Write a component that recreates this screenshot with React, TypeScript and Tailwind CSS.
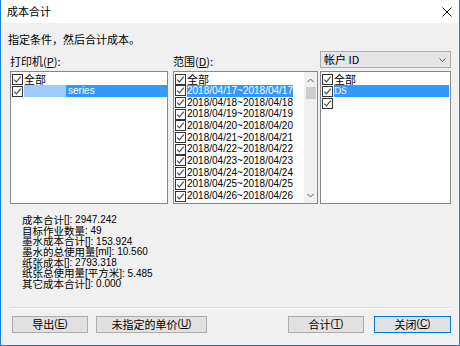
import React from "react";

const cjk = "font-['Noto_Sans_CJK_SC',sans-serif]";
const mixed = "font-['Liberation_Sans','Noto_Sans_CJK_SC',sans-serif]";

const Check = () => (
  <svg width="11" height="11" viewBox="0 0 11 11" className="shrink-0">
    <rect x="0.5" y="0.5" width="10" height="10" fill="#fff" stroke="#333" />
    <path d="M2.2 5.6 L4.4 7.9 L8.8 2.6" fill="none" stroke="#444" strokeWidth="1.1" />
  </svg>
);

const dates = [17, 18, 19, 20, 21, 22, 23, 24, 25, 26].map(
  (d) => `2018/04/${d}~2018/04/${d}`
);

const stats = [
  "成本合计[]: 2947.242",
  "目标作业数量: 49",
  "墨水成本合计[]: 153.924",
  "墨水的总使用量[ml]: 10.560",
  "纸张成本[]: 2793.318",
  "纸张总使用量[平方米]: 5.485",
  "其它成本合计[]: 0.000",
];

// split a line into CJK / latin runs so each can get its own size
function runs(s: string) {
  return s.match(/[\u4e00-\u9fff]+|[^\u4e00-\u9fff]+/g) || [];
}

function Btn({ label, k, primary }: { label: string; k: string; primary?: boolean }) {
  return (
    <button
      className={`w-full h-[17px] flex items-center justify-center bg-[#e1e1e1] border text-[11px] text-black leading-none ${cjk} ${
        primary ? "border-[#0078d7]" : "border-[#adadad]"
      }`}
    >
      {label}
      <span className="font-['Liberation_Sans',sans-serif] text-[10px]">
        (<u>{k}</u>)
      </span>
    </button>
  );
}

export default function App() {
  return (
    <div className="w-[460px] h-[346px] flex flex-col border-x border-b border-[#1a80d6] bg-[#f0f0f0] overflow-hidden">
      {/* title bar */}
      <div className="h-[23px] bg-white flex items-center justify-between pl-[6px] pr-[7px] shrink-0">
        <span className={`text-[11px] text-black ${cjk}`}>成本合计</span>
        <svg width="10" height="10" viewBox="0 0 10 10">
          <path d="M0.5 0.5 L9.5 9.5 M9.5 0.5 L0.5 9.5" stroke="#111" strokeWidth="1" />
        </svg>
      </div>

      <div className="flex-1 flex flex-col">
        <p className={`text-[11px] text-black leading-[16px] pl-[7px] pt-[8px] ${cjk}`}>
          指定条件，然后合计成本。
        </p>

        <div className="flex mt-[4px] pl-[9px]">
          {/* printers */}
          <div className="w-[158px] flex flex-col">
            <div className={`h-[20px] flex items-center pt-[1px] text-[11px] text-black ${cjk}`}>
              打印机(<u>P</u>):
            </div>
            <div className="h-[133px] bg-white border border-[#828790] pt-[1px] pl-[1px]">
              <div className={`h-[12px] flex items-center gap-[1px] text-[11px] text-black ${cjk}`}>
                <Check />
                <span className="leading-none">全部</span>
              </div>
              <div className={`h-[12px] flex items-center gap-[1px] text-[10px] ${mixed}`}>
                <Check />
                <div className="flex-1 h-full bg-[#3399ff] flex items-center">
                  <span className="w-[42px] h-full bg-[#9ecbff]" />
                  <span className="ml-[2px] text-white leading-none">series</span>
                </div>
              </div>
            </div>
          </div>

          {/* range */}
          <div className="w-[145px] ml-[5px] flex flex-col">
            <div className={`h-[20px] flex items-center pt-[1px] text-[11px] text-black ${cjk}`}>
              范围(<u>D</u>):
            </div>
            <div className="h-[133px] bg-white border border-[#828790] flex overflow-hidden">
              <div className="flex-1 pt-[1px] pl-[1px] overflow-hidden">
                <div className={`h-[12px] flex items-center gap-[1px] text-[11px] text-black ${cjk}`}>
                  <Check />
                  <span className="leading-none">全部</span>
                </div>
                {dates.map((d, i) => (
                  <div key={d} className={`h-[11.7px] flex items-center gap-[1px] text-[10px] ${mixed}`}>
                    <Check />
                    <span
                      className={`h-full flex items-center leading-none whitespace-nowrap ${
                        i === 0 ? "bg-[#3399ff] text-white" : "text-black"
                      }`}
                    >
                      {d}
                    </span>
                  </div>
                ))}
              </div>
              <div className="w-[13px] bg-[#f0f0f0] flex flex-col items-center pt-[6px] pb-[5px]">
                <svg width="7" height="5" viewBox="0 0 7 5" className="shrink-0">
                  <path d="M0.5 4 L3.5 1 L6.5 4" fill="none" stroke="#606060" strokeWidth="1" />
                </svg>
                <div className="w-[10px] h-[12px] bg-[#cdcdcd] mt-[4px] shrink-0" />
                <div className="flex-1" />
                <svg width="7" height="5" viewBox="0 0 7 5" className="shrink-0">
                  <path d="M0.5 1 L3.5 4 L6.5 1" fill="none" stroke="#606060" strokeWidth="1" />
                </svg>
              </div>
            </div>
          </div>

          {/* account */}
          <div className="w-[131px] ml-[2px] flex flex-col">
            <div className="h-[20px] pb-[3px]">
              <div className="h-[17px] bg-[#e5e5e5] border border-[#acacac] flex items-center justify-between pl-[3px] pr-[4px]">
                <span className={`text-[11px] text-black leading-none ${cjk}`}>帐户 ID</span>
                <svg width="7" height="4" viewBox="0 0 7 4">
                  <path d="M0.5 0.5 L3.5 3.5 L6.5 0.5" fill="none" stroke="#555" strokeWidth="1" />
                </svg>
              </div>
            </div>
            <div className="h-[133px] bg-white border border-[#828790] pt-[1px] pl-[1px] pr-[1px]">
              <div className={`h-[12px] flex items-center gap-[1px] text-[11px] text-black ${cjk}`}>
                <Check />
                <span className="leading-none">全部</span>
              </div>
              <div className={`h-[12px] flex items-center gap-[1px] text-[10px] ${mixed}`}>
                <Check />
                <span className="flex-1 h-full bg-[#3399ff] text-white flex items-center leading-none font-['Liberation_Serif',serif]">
                  DS
                </span>
              </div>
              <div className="h-[12px] flex items-center">
                <Check />
              </div>
            </div>
          </div>
        </div>

        {/* statistics */}
        <div className="pl-[21px] pt-[11px] text-black">
          {stats.map((s) => (
            <div key={s} className="h-[10.67px] flex items-center whitespace-nowrap leading-none">
              {runs(s).map((r, i) =>
                /[\u4e00-\u9fff]/.test(r) ? (
                  <span key={i} className={`text-[10.5px] ${cjk}`}>{r}</span>
                ) : (
                  <span key={i} className="text-[10px] font-['Liberation_Sans',sans-serif] whitespace-pre">{r}</span>
                )
              )}
            </div>
          ))}
        </div>

        <div className="mt-auto mx-[9px] border-t border-[#d9d9d9] border-b border-b-white" />

        <div className="flex items-center h-[36px] pb-[8px] pt-[2px] pl-[11px] pr-[8px]">
          <div className="w-[76px]">
            <Btn label="导出" k="E" />
          </div>
          <div className="w-[111px] ml-[8px]">
            <Btn label="未指定的单价" k="U" />
          </div>
          <div className="flex-1" />
          <div className="w-[76px]">
            <Btn label="合计" k="T" />
          </div>
          <div className="w-[77px] ml-[10px]">
            <Btn label="关闭" k="C" primary />
          </div>
        </div>
      </div>
    </div>
  );
}
